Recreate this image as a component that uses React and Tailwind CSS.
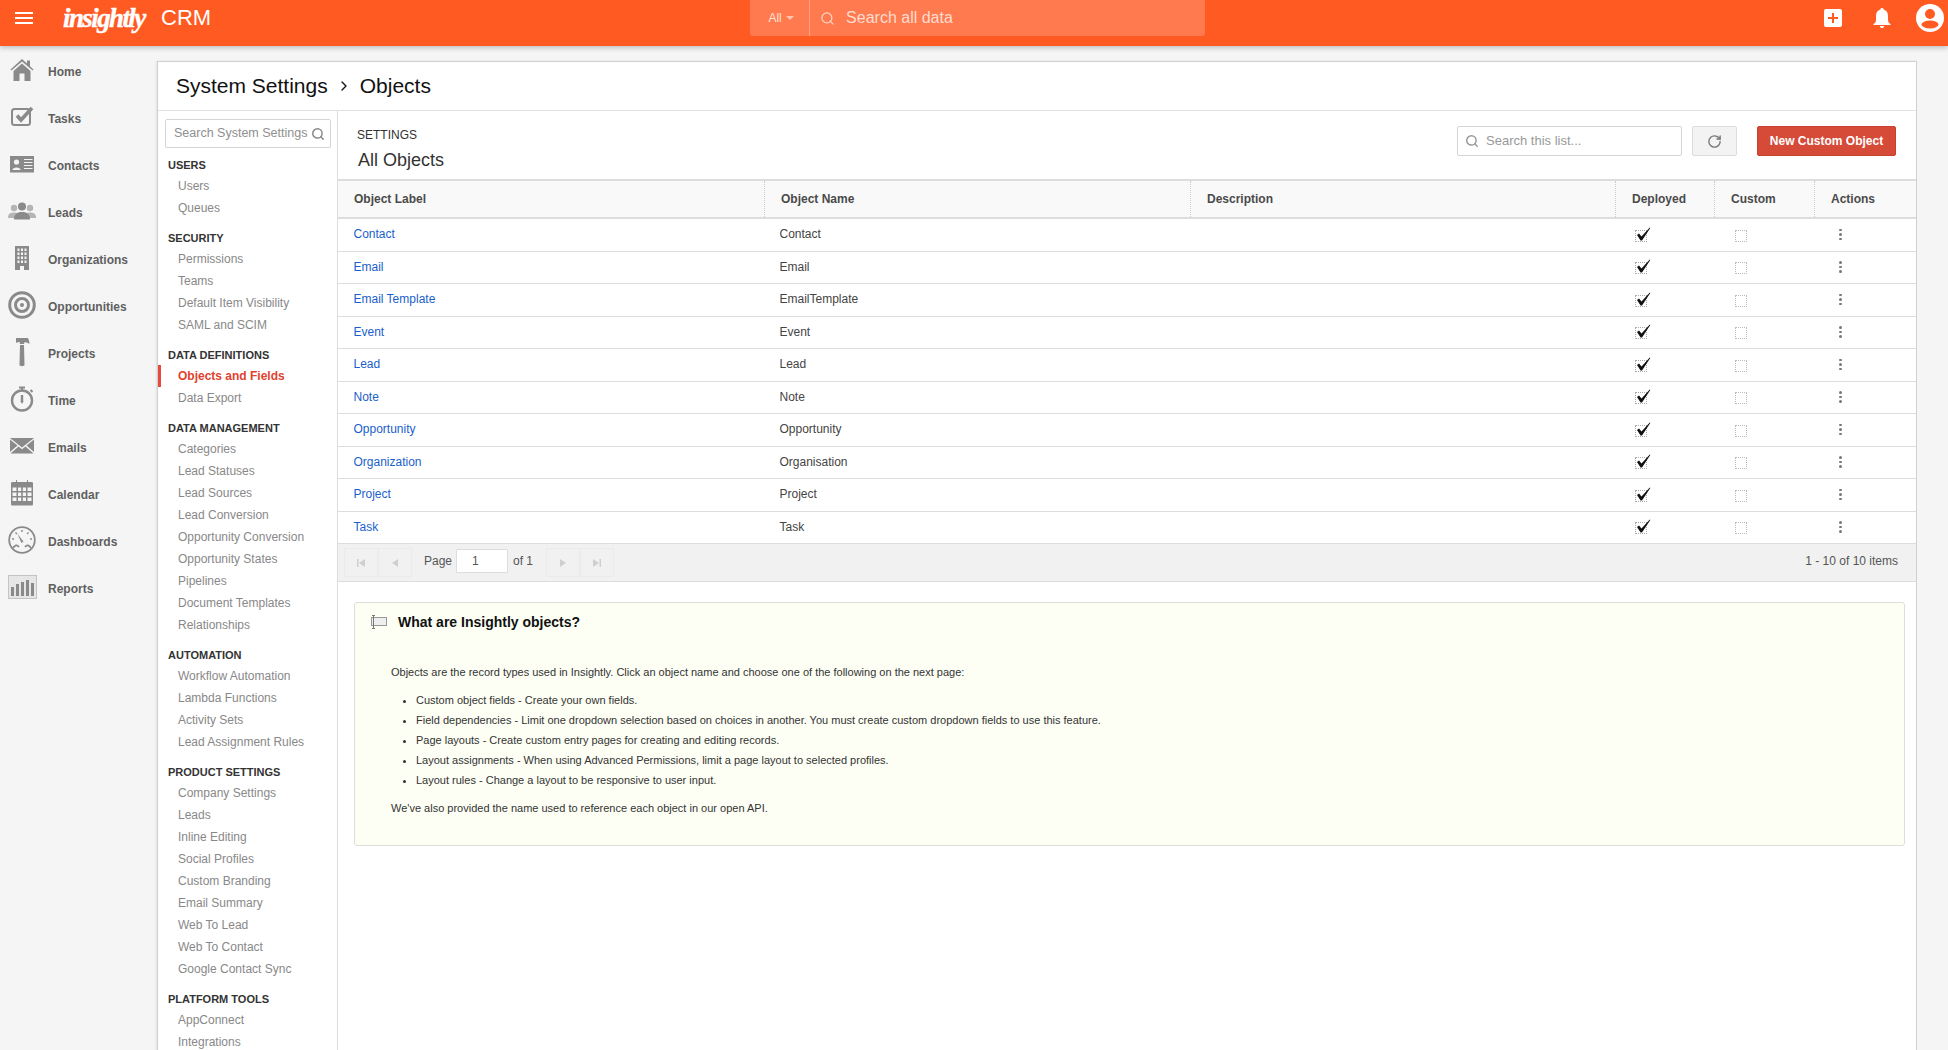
import { Search, RotateCw, ChevronRight } from 'lucide-react';

const G = '#8a8a8a';

const HomeIcon = () => (
  <svg width="28" height="28" viewBox="0 0 28 28" fill={G}>
    <path d="M14 3 L19 7.5 V4.5 H22 V10.2 L25.5 13.5 L24.6 14.6 L14 5.6 L3.4 14.6 L2.5 13.5 Z" />
    <path d="M5.5 15 L14 7.6 L22.5 15 V25 H16.5 V17.5 H11.5 V25 H5.5 Z" />
  </svg>
);

const TasksIcon = () => (
  <svg width="28" height="28" viewBox="0 0 28 28" fill="none" stroke={G}>
    <rect x="4" y="6" width="18" height="16" rx="2.5" strokeWidth="2" />
    <path d="M9 12.5 L13 17 L24 5" strokeWidth="3.6" />
  </svg>
);

const ContactsIcon = () => (
  <svg width="28" height="28" viewBox="0 0 28 28" fill={G}>
    <path fillRule="evenodd" d="M2 6 H26 V22.5 H2 Z M4 8.5 V20.5 H14 V8.5 Z" />
    <rect x="3" y="7" width="11" height="15" />
    <circle cx="8.5" cy="12" r="2.6" fill="#f5f5f5" />
    <path d="M4.4 20 C4.5 16.5 12.5 16.5 12.6 20 Z" fill="#f5f5f5" />
    <path d="M16 9.5 H24.5 M16 12.5 H24.5 M16 15.5 H24.5 M16 18.5 H24.5" stroke="#f5f5f5" strokeWidth="1" />
  </svg>
);

const LeadsIcon = () => (
  <svg width="28" height="28" viewBox="0 0 28 28">
    <g fill="#b5b5b5">
      <circle cx="6" cy="11" r="3.2" />
      <path d="M0 21 C0 16 3 15.5 6 15.5 C9 15.5 12 16 12 21 Z" />
      <circle cx="22" cy="11" r="3.2" />
      <path d="M16 21 C16 16 19 15.5 22 15.5 C25 15.5 28 16 28 21 Z" />
    </g>
    <g fill={G}>
      <circle cx="14" cy="9.5" r="4" />
      <path d="M6 22.5 C6 16.5 10 15 14 15 C18 15 22 16.5 22 22.5 Z" />
    </g>
  </svg>
);

const OrgIcon = () => (
  <svg width="28" height="28" viewBox="0 0 28 28" fill={G}>
    <path fillRule="evenodd" d="M7 2 H21 V26 H16 V22 H12 V26 H7 Z M9.5 4.5 V7 H11.5 V4.5 Z M13 4.5 V7 H15 V4.5 Z M16.5 4.5 V7 H18.5 V4.5 Z M9.5 8.5 V11 H11.5 V8.5 Z M13 8.5 V11 H15 V8.5 Z M16.5 8.5 V11 H18.5 V8.5 Z M9.5 12.5 V15 H11.5 V12.5 Z M13 12.5 V15 H15 V12.5 Z M16.5 12.5 V15 H18.5 V12.5 Z M9.5 16.5 V19 H11.5 V16.5 Z M13 16.5 V19 H15 V16.5 Z M16.5 16.5 V19 H18.5 V16.5 Z" />
  </svg>
);

const OppIcon = () => (
  <svg width="28" height="28" viewBox="0 0 28 28" fill="none" stroke={G}>
    <circle cx="14" cy="14" r="12.3" strokeWidth="3" />
    <circle cx="14" cy="14" r="6.5" strokeWidth="3" />
    <circle cx="14" cy="14" r="2" fill={G} stroke="none" />
  </svg>
);

const HammerIcon = () => (
  <svg width="28" height="30" viewBox="0 0 28 30" fill={G}>
    <path d="M8 1 H20 C21 3 21.5 5 21.5 7 C20 5.8 18.5 5.3 16.5 5.3 L16 7 H12 L11.5 5 C10.5 5 9.5 5.2 8 6 Z" />
    <path d="M12 8 H16 L16.5 28 C16.5 29.5 11.5 29.5 11.5 28 Z" />
  </svg>
);

const TimeIcon = () => (
  <svg width="28" height="28" viewBox="0 0 28 28" fill="none" stroke={G}>
    <circle cx="14" cy="15.5" r="10" strokeWidth="2.4" />
    <path d="M11 2.5 H17 M14 2.5 V5.5 M22.5 5 L24.5 7" strokeWidth="2" />
    <path d="M14 10 V17" strokeWidth="2.4" />
    <path d="M12.4 16 H15.6 L14 19 Z" fill={G} stroke="none" />
  </svg>
);

const EmailIcon = () => (
  <svg width="28" height="28" viewBox="0 0 28 28" fill={G}>
    <path d="M2 6 H26 L14 15.5 Z" />
    <path d="M2 7.5 L9.5 13.5 L2 20 Z" />
    <path d="M26 7.5 L18.5 13.5 L26 20 Z" />
    <path d="M2.5 21.5 L10.5 14.5 L14 17.2 L17.5 14.5 L25.5 21.5 Z" />
  </svg>
);

const CalendarIcon = () => (
  <svg width="28" height="28" viewBox="0 0 28 28" fill={G}>
    <path fillRule="evenodd" d="M3 4.5 C3 3.5 3.5 3 4.5 3 H8 V1 H9 V3 H19 V1 H20 V3 H23.5 C24.5 3 25 3.5 25 4.5 V25 C25 26 24.5 26.5 23.5 26.5 H4.5 C3.5 26.5 3 26 3 25 Z M4.5 8.5 V12 H8.5 V8.5 Z M10 8.5 V12 H13.2 V8.5 Z M14.8 8.5 V12 H18 V8.5 Z M19.5 8.5 V12 H23.5 V8.5 Z M4.5 13.5 V17 H8.5 V13.5 Z M10 13.5 V17 H13.2 V13.5 Z M14.8 13.5 V17 H18 V13.5 Z M19.5 13.5 V17 H23.5 V13.5 Z M4.5 18.5 V22 H8.5 V18.5 Z M10 18.5 V22 H13.2 V18.5 Z M14.8 18.5 V22 H18 V18.5 Z M19.5 18.5 V22 H23.5 V18.5 Z" />
  </svg>
);

const DashIcon = () => (
  <svg width="28" height="28" viewBox="0 0 28 28" fill="none" stroke={G}>
    <circle cx="14" cy="14" r="12.8" strokeWidth="1.8" />
    <path d="M14 4 V6 M7.5 6.5 L9 8 M4 13 H6 M20.5 6.5 L19 8 M24 13 H22" strokeWidth="1.4" />
    <path d="M9.5 8 L15.5 15.5 L13.5 17 Z" fill={G} stroke="none" />
    <path d="M5 22 C7 19 9 18.5 11 21 M23 22 C21 19 19 18.5 17 21" strokeWidth="1.8" />
  </svg>
);

const ReportsIcon = () => (
  <svg width="29" height="24" viewBox="0 0 29 24">
    <rect x="0.5" y="0.5" width="28" height="23" fill="#e6e6e6" stroke="#c4c4c4" />
    <g fill={G}>
      <rect x="3" y="12" width="3" height="9" />
      <rect x="8" y="9" width="3" height="12" />
      <rect x="13" y="7" width="3" height="14" />
      <rect x="18" y="5" width="3" height="16" />
      <rect x="23" y="8" width="3" height="13" />
    </g>
  </svg>
);

const mainNav = [
  ['Home', HomeIcon],
  ['Tasks', TasksIcon],
  ['Contacts', ContactsIcon],
  ['Leads', LeadsIcon],
  ['Organizations', OrgIcon],
  ['Opportunities', OppIcon],
  ['Projects', HammerIcon],
  ['Time', TimeIcon],
  ['Emails', EmailIcon],
  ['Calendar', CalendarIcon],
  ['Dashboards', DashIcon],
  ['Reports', ReportsIcon],
];

const settings = [
  ['Users', ['Users', 'Queues']],
  ['Security', ['Permissions', 'Teams', 'Default Item Visibility', 'SAML and SCIM']],
  ['Data Definitions', ['Objects and Fields', 'Data Export']],
  ['Data Management', ['Categories', 'Lead Statuses', 'Lead Sources', 'Lead Conversion', 'Opportunity Conversion', 'Opportunity States', 'Pipelines', 'Document Templates', 'Relationships']],
  ['Automation', ['Workflow Automation', 'Lambda Functions', 'Activity Sets', 'Lead Assignment Rules']],
  ['Product Settings', ['Company Settings', 'Leads', 'Inline Editing', 'Social Profiles', 'Custom Branding', 'Email Summary', 'Web To Lead', 'Web To Contact', 'Google Contact Sync']],
  ['Platform Tools', ['AppConnect', 'Integrations']],
];

const objects = [
  ['Contact', 'Contact'],
  ['Email', 'Email'],
  ['Email Template', 'EmailTemplate'],
  ['Event', 'Event'],
  ['Lead', 'Lead'],
  ['Note', 'Note'],
  ['Opportunity', 'Opportunity'],
  ['Organization', 'Organisation'],
  ['Project', 'Project'],
  ['Task', 'Task'],
];

const gridCols = 'grid grid-cols-[426px_426px_425px_99px_100px_102px]';

function TopBar() {
  return (
    <header className="relative z-10 h-[46px] bg-[#ff5a22] shadow-[0_2px_5px_rgba(0,0,0,0.22)]">
      <div className="flex h-[36px] items-center">
        <div className="ml-[15px] flex w-[18px] flex-col gap-[3px]">
          <span className="h-[2px] bg-white" />
          <span className="h-[2px] bg-white" />
          <span className="h-[2px] bg-white" />
        </div>
        <span className="ml-[30px] w-[98px] font-['Liberation_Serif'] text-[27px] leading-none font-bold tracking-[-1.6px] text-white italic [-webkit-text-stroke:0.4px_white]">insightly</span>
        <span className="text-[22px] leading-none text-white">CRM</span>
        <div className="ml-[539px] flex h-[36px] w-[455px] rounded-b-[3px] bg-[#ff7a4f]">
          <div className="flex w-[60px] items-center justify-center gap-[4px] border-r border-[#ffa383] pl-[3px] text-[12px] text-[#ffe0d4]">
            All
            <span className="h-0 w-0 border-x-[4px] border-t-[4px] border-x-transparent border-t-[#ffc4ae]" />
          </div>
          <div className="flex items-center pl-[10px] text-[16px] text-[#ffdccf]">
            <Search size={15} strokeWidth={2} className="text-[#ffd5c5]" />
            <span className="ml-[11px]">Search all data</span>
          </div>
        </div>
        <div className="ml-auto flex items-center">
          <span className="flex h-[18px] w-[18px] items-center justify-center rounded-[2px] bg-white">
            <svg width="10" height="10" viewBox="0 0 10 10" fill="#ff5a22">
              <path d="M4 0 H6 V4 H10 V6 H6 V10 H4 V6 H0 V4 H4 Z" />
            </svg>
          </span>
          <svg className="ml-[31px]" width="18" height="22" viewBox="0 0 18 22" fill="white">
            <path d="M9 1 C10 1 10.6 1.6 10.7 2.6 C13.6 3.4 15 5.8 15 9 V13 C15 15 16 16 17.5 17 V18 H0.5 V17 C2 16 3 15 3 13 V9 C3 5.8 4.4 3.4 7.3 2.6 C7.4 1.6 8 1 9 1 Z" />
            <path d="M6.8 19 H11.2 C11 20.5 10.2 21 9 21 C7.8 21 7 20.5 6.8 19 Z" />
          </svg>
          <svg className="mr-[4px] ml-[25px]" width="28" height="28" viewBox="0 0 28 28">
            <circle cx="14" cy="14" r="14" fill="white" />
            <circle cx="14" cy="10" r="5" fill="#ff5a22" />
            <ellipse cx="14" cy="20.5" rx="8.5" ry="4" fill="#ff5a22" />
          </svg>
        </div>
      </div>
    </header>
  );
}

function Sidebar() {
  return (
    <aside className="w-[157px] shrink-0 pt-[2px]">
      {mainNav.map(([label, Icon]) => (
        <div key={label} className="flex h-[47px] items-center">
          <span className="-mt-[3px] flex w-[44px] justify-center"><Icon /></span>
          <span className="ml-[4px] text-[12px] font-bold text-[#5f5f5f]">{label}</span>
        </div>
      ))}
    </aside>
  );
}

function SettingsNav() {
  return (
    <nav className="w-[180px] shrink-0 border-r border-[#ddd] pt-[8px]">
      <div className="mx-[7px] flex h-[29px] w-[166px] items-center justify-between rounded-[2px] border border-[#d5d5d5] pr-[5px] pl-[8px] text-[12.5px] text-[#8f8f8f]">
        Search System Settings
        <Search size={14} strokeWidth={2.5} className="text-[#888]" />
      </div>
      <div className="pt-[8px]">
        {settings.map(([title, items]) => (
          <div key={title} className="mb-[10px]">
            <div className="h-[19px] pl-[10px] text-[11px] leading-[19px] font-bold text-[#333] uppercase">{title}</div>
            {items.map((item) => {
              const active = item === 'Objects and Fields';
              return (
                <div
                  key={item}
                  className={`h-[22px] text-[12px] leading-[22px] ${active ? 'border-l-[3px] border-[#e64a3a] pl-[17px] font-bold text-[#e2412e]' : 'pl-[20px] text-[#888]'}`}
                >
                  {item}
                </div>
              );
            })}
          </div>
        ))}
      </div>
    </nav>
  );
}

function Cell({ children }) {
  return <div className="flex items-center pb-[1px] pl-[15.5px] text-[12px] text-[#444]">{children}</div>;
}

function Pager({ d }) {
  return (
    <span className="flex h-[29px] w-[34px] items-center justify-center border border-[#ebebeb]">
      <svg width="10" height="10" viewBox="0 0 10 10" fill="#cfcfcf"><path d={d} /></svg>
    </span>
  );
}

function ObjectsTable() {
  return (
    <div>
      <div className={`${gridCols} h-[40px] border-y-2 border-[#ddd] bg-[#f9f9f9] text-[12px] font-bold text-[#4a4a4a]`}>
        {['Object Label', 'Object Name', 'Description', 'Deployed', 'Custom', 'Actions'].map((h, i) => (
          <div key={h} className={`flex items-center pl-[16px] ${i > 0 ? 'border-l border-dotted border-[#ccc]' : ''}`}>{h}</div>
        ))}
      </div>
      {objects.map(([label, name]) => (
        <div key={label} className={`${gridCols} h-[32.5px] border-b border-[#ddd]`}>
          <Cell><span className="text-[#1a5fcb]">{label}</span></Cell>
          <Cell>{name}</Cell>
          <Cell />
          <Cell>
            <span className="relative mt-[3px] ml-[4.5px] h-[12px] w-[12px] border border-dotted border-[#aaa]">
              <svg className="absolute -top-[4px] left-0" width="15" height="15" viewBox="0 0 15 15" fill="#111">
                <path d="M1 8 L3 6.5 L5.5 9.5 L13.8 0.5 L14.3 1 L6 13.5 L4.6 13.5 Z" />
              </svg>
            </span>
          </Cell>
          <Cell><span className="mt-[3px] ml-[5.5px] h-[12px] w-[12px] border border-dotted border-[#bbb]" /></Cell>
          <Cell>
            <span className="ml-[9.5px] flex flex-col gap-[2px]">
              <span className="h-[2.5px] w-[2.5px] rounded-full bg-[#777]" />
              <span className="h-[2.5px] w-[2.5px] rounded-full bg-[#777]" />
              <span className="h-[2.5px] w-[2.5px] rounded-full bg-[#777]" />
            </span>
          </Cell>
        </div>
      ))}
      <div className="flex h-[38px] items-center border-b border-[#ddd] bg-[#f1f1f1] pr-[18px] pl-[6px] text-[12px] text-[#555]">
        <Pager d="M1 1 H2.5 V9 H1 Z M9 1 V9 L3 5 Z" />
        <Pager d="M8 1 V9 L2 5 Z" />
        <span className="-mt-[3px] ml-[12px]">Page</span>
        <span className="-mt-[3px] ml-[4px] flex h-[24px] w-[52px] items-center rounded-[1px] border border-[#ddd] bg-white pl-[15px]">1</span>
        <span className="-mt-[3px] ml-[5px]">of 1</span>
        <span className="ml-[13px] flex">
          <Pager d="M2 1 V9 L8 5 Z" />
          <Pager d="M1 1 V9 L7 5 Z M7.5 1 H9 V9 H7.5 Z" />
        </span>
        <span className="-mt-[3px] ml-auto">1 - 10 of 10 items</span>
      </div>
    </div>
  );
}

function HelpPanel() {
  const bullets = [
    'Custom object fields - Create your own fields.',
    'Field dependencies - Limit one dropdown selection based on choices in another. You must create custom dropdown fields to use this feature.',
    'Page layouts - Create custom entry pages for creating and editing records.',
    'Layout assignments - When using Advanced Permissions, limit a page layout to selected profiles.',
    'Layout rules - Change a layout to be responsive to user input.',
  ];
  return (
    <section className="mt-[20px] mr-[11px] ml-[16px] rounded-[3px] border border-[#ddd] bg-[#fdfff5] pt-[7px] pb-[27px] text-[11px] text-[#333]">
      <div className="flex h-[24px] items-center pl-[15px]">
        <svg width="17" height="14" viewBox="0 0 17 14" fill="none" stroke="#999">
          <rect x="1.5" y="2.5" width="15" height="8" fill="#eee" />
          <path d="M3.5 0.5 V13.5 M2 0.5 H5 M2 13.5 H5" stroke="#777" />
        </svg>
        <h3 className="ml-[11px] text-[14px] font-bold text-[#111]">What are Insightly objects?</h3>
      </div>
      <p className="mt-[28px] pl-[36px] leading-[20px]">Objects are the record types used in Insightly. Click an object name and choose one of the following on the next page:</p>
      <ul className="mt-[8px] list-disc pl-[61px] leading-[20px]">
        {bullets.map((b) => <li key={b}>{b}</li>)}
      </ul>
      <p className="mt-[8px] pl-[36px] leading-[20px]">We've also provided the name used to reference each object in our open API.</p>
    </section>
  );
}

export default function App() {
  return (
    <div className="h-[1050px] overflow-hidden bg-[#f5f5f5] font-['Liberation_Sans',Arial,sans-serif]">
      <TopBar />
      <div className="flex">
        <Sidebar />
        <main className="mt-[15px] h-[1000px] w-[1760px] border border-[#d0d0d0] bg-white shadow-[-1px_0_2px_rgba(0,0,0,0.08)]">
          <div className="flex h-[49px] items-center gap-[8px] border-b border-[#e2e2e2] pl-[18px] text-[21px] text-[#111]">
            System Settings
            <ChevronRight size={16} strokeWidth={2} />
            <span>Objects</span>
          </div>
          <div className="flex">
            <SettingsNav />
            <div className="flex-1">
              <div className="flex h-[68px] justify-between pr-[20px] pl-[19px]">
                <div className="pt-[16px]">
                  <div className="text-[12px] leading-[16px] text-[#333]">SETTINGS</div>
                  <div className="mt-[6px] ml-[1px] text-[18px] leading-[22px] text-[#333]">All Objects</div>
                </div>
                <div className="flex gap-[10px] pt-[15px]">
                  <div className="flex h-[30px] w-[225px] items-center rounded-[2px] border border-[#d5d5d5] pl-[7px] text-[13px] text-[#999]">
                    <Search size={14} strokeWidth={2.5} className="text-[#999]" />
                    <span className="ml-[7px]">Search this list...</span>
                  </div>
                  <div className="flex h-[30px] w-[45px] items-center justify-center rounded-[2px] border border-[#ddd] bg-[#f3f3f3]">
                    <RotateCw size={15} strokeWidth={2.2} className="text-[#777]" />
                  </div>
                  <div className="ml-[10px] flex h-[30px] w-[139px] items-center justify-center rounded-[2px] border border-[#c9402e] bg-[#d64a38] text-[12px] font-bold text-white">
                    New Custom Object
                  </div>
                </div>
              </div>
              <ObjectsTable />
              <HelpPanel />
            </div>
          </div>
        </main>
      </div>
    </div>
  );
}
